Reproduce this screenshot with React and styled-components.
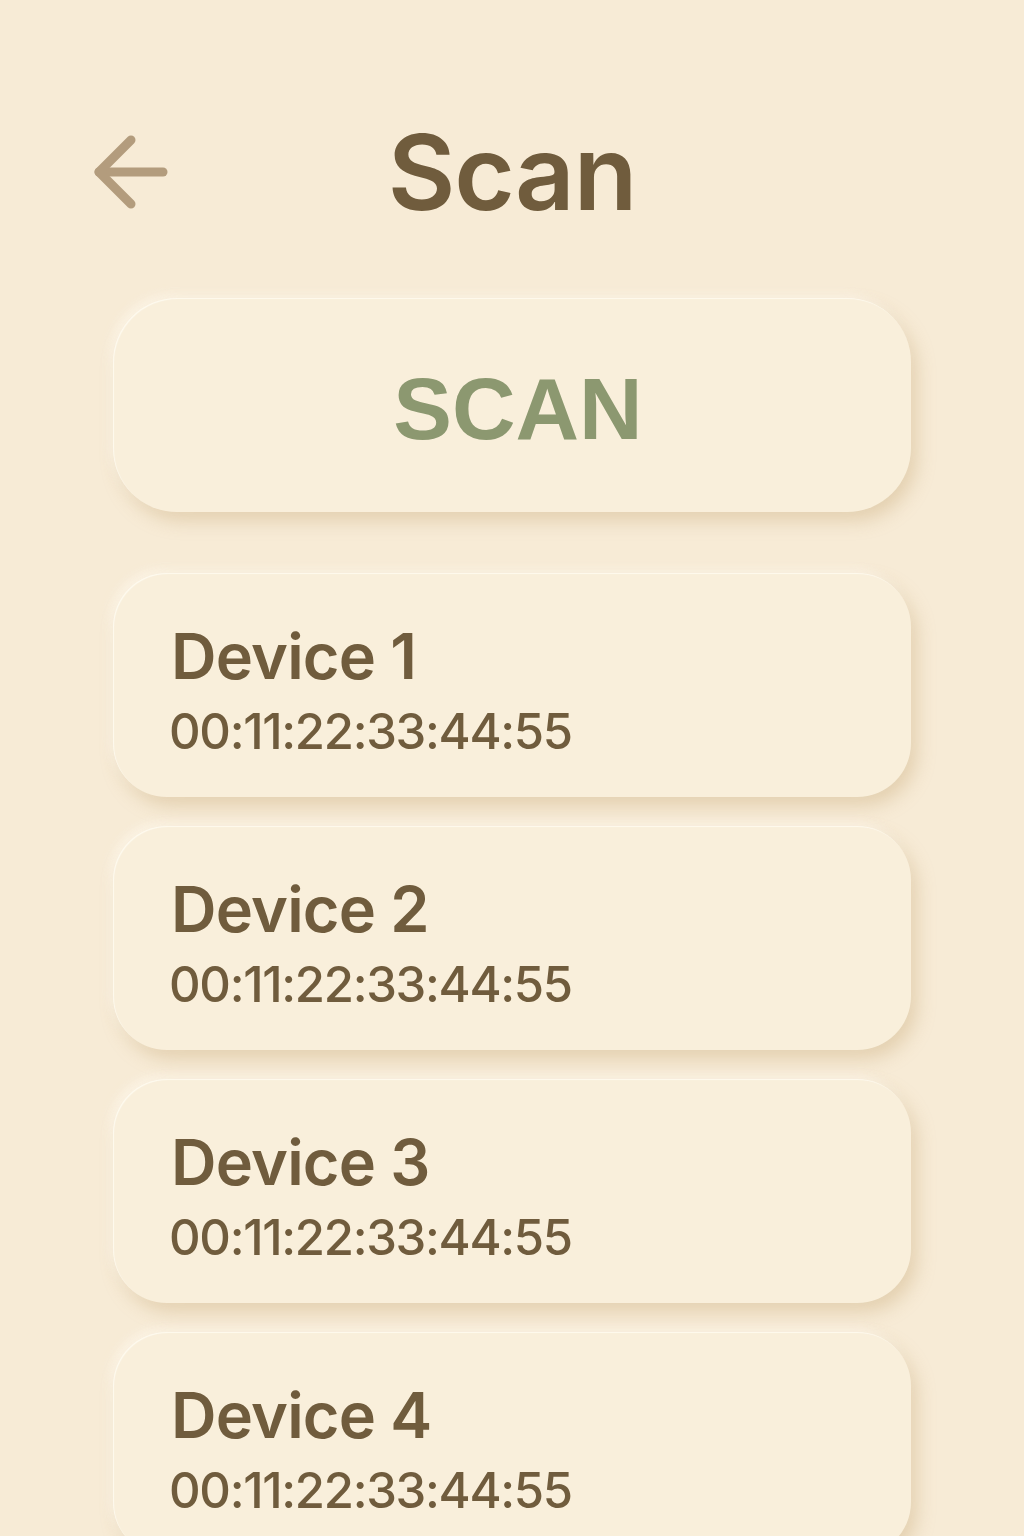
import React from 'react'
import styled, { createGlobalStyle } from 'styled-components'

const GlobalStyle = createGlobalStyle`
  html, body {
    margin: 0;
    padding: 0;
    background: #f7ebd6;
  }
  body {
    font-family: Inter, "Noto Sans", sans-serif;
  }
`

const Page = styled.div`
  min-height: 1536px;
  background: #f7ebd6;
  padding-top: 112px;
  box-sizing: border-box;
  overflow: hidden;
`

const Header = styled.header`
  display: grid;
  grid-template-columns: 1fr auto 1fr;
  align-items: center;
  height: 120px;
`

const BackButton = styled.button`
  justify-self: start;
  margin-left: 91px;
  padding: 0;
  border: 0;
  background: none;
  display: flex;
  cursor: pointer;
`

const Title = styled.h1`
  margin: 0;
  font-family: Inter, sans-serif;
  font-weight: 600;
  font-size: 104px;
  line-height: 1;
  letter-spacing: -1px;
  color: #705c3d;
`

const Column = styled.main`
  width: 798px;
  margin: 66px auto 0;
  display: flex;
  flex-direction: column;
  gap: 29px;
`

const raised = `
  background: #f9efdb;
  box-shadow:
    6px 9px 18px rgba(196, 166, 116, 0.38),
    -4px -4px 10px rgba(255, 250, 238, 0.7),
    inset 1px 1px 1px rgba(255, 252, 244, 0.8);
`

const ScanButton = styled.button`
  ${raised}
  height: 214px;
  border: 0;
  border-radius: 64px;
  margin-bottom: 32px;
  padding: 8px 0 0 12px;
  font-family: "Liberation Sans", Arial, sans-serif;
  font-weight: 700;
  font-size: 88px;
  color: #8c9870;
  cursor: pointer;
`

const DeviceCard = styled.div`
  ${raised}
  height: 224px;
  border-radius: 54px;
  padding: 10px 58px 0;
  display: flex;
  flex-direction: column;
  justify-content: center;
  gap: 19px;
  box-sizing: border-box;
`

const DeviceName = styled.div`
  font-family: Inter, sans-serif;
  font-weight: 600;
  font-size: 63px;
  line-height: 1;
  letter-spacing: -0.8px;
  color: #705c3d;
`

const DeviceMac = styled.div`
  font-family: Inter, sans-serif;
  font-weight: 500;
  font-size: 49px;
  line-height: 1;
  letter-spacing: -1.3px;
  margin-left: -2px;
  color: #705c3d;
`

const ArrowLeft = () => (
  <svg width="80" height="80" viewBox="0 0 80 80" fill="none"
    stroke="#b39c7d" strokeWidth="9" strokeLinecap="round" strokeLinejoin="round">
    <path d="M72 40H8" />
    <path d="M40 8L8 40l32 32" />
  </svg>
)

const devices = [
  { name: 'Device 1', mac: '00:11:22:33:44:55' },
  { name: 'Device 2', mac: '00:11:22:33:44:55' },
  { name: 'Device 3', mac: '00:11:22:33:44:55' },
  { name: 'Device 4', mac: '00:11:22:33:44:55' },
]

export default function App() {
  return (
    <Page>
      <GlobalStyle />
      <Header>
        <BackButton aria-label="Back"><ArrowLeft /></BackButton>
        <Title>Scan</Title>
        <span />
      </Header>
      <Column>
        <ScanButton>SCAN</ScanButton>
        {devices.map((d, i) => (
          <DeviceCard key={i}>
            <DeviceName>{d.name}</DeviceName>
            <DeviceMac>{d.mac}</DeviceMac>
          </DeviceCard>
        ))}
      </Column>
    </Page>
  )
}
